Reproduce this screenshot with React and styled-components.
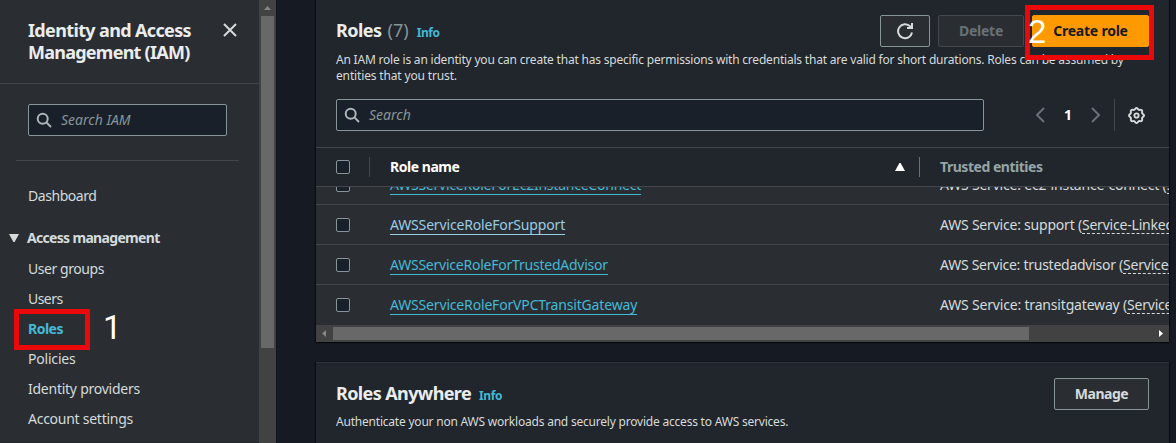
import React from 'react';
import styled, { createGlobalStyle } from 'styled-components';

const Global = createGlobalStyle`
  * { box-sizing: border-box; }
  body { margin: 0; background: #161a22; font: 14px/22px "Noto Sans", "Open Sans", sans-serif; color: #d5dbdb; }
  html, body { overflow: hidden; }
`;

const Page = styled.div`
  position: relative;
  display: flex;
  width: 1176px;
  height: 443px;
  overflow: hidden;
`;
const Txt = styled.span`
  letter-spacing: ${p => p.$ls || 0}px;
  white-space: pre;
`;

/* Side navigation */
const Sidebar = styled.nav`
  width: 259px;
  flex: none;
  background: #2a2e33;
  border-bottom: 1px solid #222529;
`;
const SideHeader = styled.header`
  display: flex;
  justify-content: space-between;
  align-items: flex-start;
  height: 84px;
  padding: 19px 21px 0 28px;
  border-bottom: 1px solid #43474c;
`;
const SideTitle = styled.h2`
  margin: 0;
  font-size: 18px;
  line-height: 22px;
  color: #eaeded;
`;
const CloseIcon = styled.svg`
  margin-top: 3px;
`;
const SearchBox = styled.div`
  display: flex;
  align-items: center;
  gap: 9px;
  width: ${p => p.$w}px;
  height: 32px;
  padding: 0 0 1px 7px;
  border: 1px solid #879596;
  border-radius: 2px;
  background: #1a2029;
  color: #879596;
  font-style: italic;
  line-height: 20px;
  svg { flex: none; margin-top: 1px; }
`;
const SideSearch = styled.div`
  margin: 20px 20px 0 16px;
  padding: 0 0 24px 12px;
  border-bottom: 1px solid #43474c;
`;
const NavList = styled.div`
  display: flex;
  flex-direction: column;
  gap: 8px;
  padding: 24px 0 0 28px;
`;
const NavItem = styled.div`
  height: 22px;
  color: ${p => (p.$active ? '#44b9d6' : '#d5dbdb')};
  font-weight: ${p => (p.$active ? 700 : 400)};
`;
const NavGroup = styled.div`
  display: flex;
  align-items: center;
  gap: 8px;
  height: 22px;
  margin: 12px 0 1px -19px;
  font-weight: 700;
`;
const VScroll = styled.div`
  width: 17px;
  flex: none;
  display: flex;
  flex-direction: column;
  align-items: center;
  background: #424242;
  padding-top: 6px;
`;
const VThumb = styled.div`
  width: 13px;
  height: 332px;
  margin-top: 6px;
  background: #686868;
`;

/* Content */
const Main = styled.main`
  flex: 1;
  padding-left: 39px;
  border-left: 1px solid #111419;
`;
const Card = styled.section`
  width: 853px;
  background: #21252c;
  box-shadow: 0 1px 1px #07090b, 1px 0 1px #0d0f13, -1px 0 1px #0d0f13;
`;
const RolesCard = styled(Card)`
  height: 342px;
`;
const AnywhereCard = styled(Card)`
  display: flex;
  justify-content: space-between;
  margin-top: 20px;
  height: 90px;
  border-top: 1px solid #2f343a;
  padding: 15px 20px 0;
`;
const CardHeader = styled.div`
  height: 99px;
  padding: 15px 20px 0;
`;
const HeaderRow = styled.div`
  display: flex;
  justify-content: space-between;
  height: 36px;
`;
const Heading = styled.h3`
  display: flex;
  align-items: baseline;
  margin: 4px 0 0;
  height: 22px;
  font-size: 18px;
  line-height: 22px;
  color: #eaeded;
`;
const Count = styled.span`
  margin-left: 6px;
  font-weight: 400;
  color: #879596;
`;
const Info = styled.span`
  margin-left: 8px;
  font-size: 12px;
  color: #44b9d6;
`;
const Desc = styled.p`
  margin: ${p => p.$top || 0}px 0 0;
  font-size: 12px;
  line-height: 16px;
  color: #d5dbdb;
`;
const Actions = styled.div`
  display: flex;
  gap: 8px;
`;
const looks = {
  normal: 'background:#2a2e33;border-color:#879596;color:#d5dbdb;',
  disabled: 'background:#2a2e33;border-color:#43474c;color:#687078;',
  primary: 'background:#ff9900;border-color:#ff9900;color:#16191f;',
};
const Button = styled.button`
  display: flex;
  align-items: center;
  justify-content: center;
  width: ${p => p.$w}px;
  height: 32px;
  padding: 0;
  border: 1px solid;
  border-radius: 2px;
  font: 700 14px/20px "Noto Sans", sans-serif;
  ${p => looks[p.$look || 'normal']}
`;
const Tools = styled.div`
  display: flex;
  align-items: center;
  padding: 0 20px;
  height: 32px;
`;
const Pager = styled.div`
  display: flex;
  align-items: center;
  margin-left: auto;
  height: 32px;
  gap: 19px;
  padding-right: 13px;
  border-right: 1px solid #43474c;
  color: #fff;
  font-weight: 700;
`;
const Gear = styled.svg`
  margin: 0 4px 0 13px;
`;

/* Table */
const grid = `
  display: grid;
  grid-template-columns: 53px 550px 1fr;
  align-items: center;
`;
const TableHead = styled.div`
  ${grid}
  height: 40px;
  margin-top: 16px;
  border-top: 1px solid #43474c;
  border-bottom: 1px solid #43474c;
  font-weight: 700;
`;
const HeadCell = styled.div`
  display: flex;
  align-items: center;
  justify-content: space-between;
  height: 20px;
  padding: 0 ${p => (p.$sorted ? 14 : 0)}px 0 20px;
  border-left: 1px solid ${p => (p.$sorted ? '#43474c' : '#687078')};
  color: ${p => (p.$sorted ? '#fff' : '#95a5a6')};
`;
const CheckCell = styled.div`
  padding-left: 20px;
`;
const Check = styled.div`
  width: 14px;
  height: 14px;
  border: 1px solid #879596;
  border-radius: 2px;
  background: #1a2029;
`;
const Body = styled.div`
  height: 138px;
  overflow: hidden;
  background: #2a2e33;
  display: flex;
  flex-direction: column;
  justify-content: flex-end;
`;
const Row = styled.div`
  ${grid}
  height: 40px;
  flex: none;
  border-bottom: ${p => (p.$last ? 0 : 1)}px solid #43474c;
`;
const Cell = styled.div`
  padding-left: 21px;
  white-space: pre;
  overflow: hidden;
`;
const RoleLink = styled.a`
  display: inline-block;
  height: 20px;
  line-height: 20px;
  border-bottom: 1px solid;
  color: ${p => (p.$hover ? '#99cbe4' : '#44b9d6')};
  letter-spacing: ${p => p.$ls}px;
`;
const Linked = styled.span`
  display: inline-block;
  height: 19px;
  line-height: 20px;
  border-bottom: 1px dashed #d5dbdb;
  letter-spacing: -0.2px;
`;
const HScroll = styled.div`
  display: flex;
  align-items: center;
  justify-content: space-between;
  height: 17px;
  padding: 0 6px;
  background: #424242;
`;
const HThumb = styled.div`
  width: 696px;
  height: 13px;
  margin: 0 auto 0 7px;
  background: #686868;
`;

/* Step annotations lying over the console */
const Mark = styled.div`
  position: absolute;
  left: ${p => p.$x}px;
  top: ${p => p.$y}px;
  width: ${p => p.$w}px;
  height: ${p => p.$h}px;
  border: 5px solid #ea0808;
`;
const Step = styled.div`
  position: absolute;
  left: ${p => p.$x}px;
  top: ${p => p.$y}px;
  font: 33px/36px ${p => p.$face || '"Liberation Sans"'}, sans-serif;
  color: #fff;
`;

const Magnifier = () => (
  <svg width="16" height="16" viewBox="0 0 16 16" fill="none" stroke="#aab7b8" strokeWidth="2">
    <circle cx="6.7" cy="6.7" r="5" />
    <path d="M10.4 10.4L15 15" />
  </svg>
);
const Chevron = ({ d }) => (
  <svg width="10" height="16" viewBox="0 0 10 16" fill="none" stroke="#687078" strokeWidth="2"><path d={d} /></svg>
);
const gearPath = (() => {
  const pts = [];
  for (let i = 0; i < 80; i++) {
    const a = (i / 80) * Math.PI * 2;
    const r = 6.4 + 0.65 * Math.cos(a * 8);
    pts.push(`${(8 + r * Math.cos(a)).toFixed(2)} ${(8 + r * Math.sin(a)).toFixed(2)}`);
  }
  return `M${pts.join('L')}Z`;
})();

const access = [
  ['User groups', -0.44], ['Users', -0.56], ['Roles', -0.5, true], ['Policies', -0.2],
  ['Identity providers', -0.25], ['Account settings', -0.26],
];
const roles = [
  { name: 'AWSServiceRoleForEc2InstanceConnect', ls: -0.23, svc: 'ec2-instance-connect', sls: -0.2 },
  { name: 'AWSServiceRoleForSupport', ls: -0.16, svc: 'support', sls: -0.21, hover: true },
  { name: 'AWSServiceRoleForTrustedAdvisor', ls: -0.23, svc: 'trustedadvisor', sls: -0.26 },
  { name: 'AWSServiceRoleForVPCTransitGateway', ls: -0.17, svc: 'transitgateway', sls: -0.18 },
];

export default function App() {
  return (
    <Page>
      <Global />
      <Sidebar>
        <SideHeader>
          <SideTitle>
            <Txt $ls={-0.64}>Identity and Access</Txt><br />
            <Txt $ls={-0.75}>Management (IAM)</Txt>
          </SideTitle>
          <CloseIcon width="16" height="16" viewBox="0 0 16 16" stroke="#d5dbdb" strokeWidth="2">
            <path d="M2 2L14 14M14 2L2 14" />
          </CloseIcon>
        </SideHeader>
        <SideSearch>
          <SearchBox $w={199}><Magnifier /><Txt>Search IAM</Txt></SearchBox>
        </SideSearch>
        <NavList>
          <NavItem><Txt $ls={-0.44}>Dashboard</Txt></NavItem>
          <NavGroup>
            <svg width="10" height="8" viewBox="0 0 10 8" fill="#d5dbdb"><path d="M0 0H10L5.6 8H4.4Z" /></svg>
            <Txt $ls={-0.68}>Access management</Txt>
          </NavGroup>
          {access.map(([t, ls, on]) => <NavItem key={t} $active={on}><Txt $ls={ls}>{t}</Txt></NavItem>)}
        </NavList>
      </Sidebar>
      <VScroll>
        <svg width="7" height="4" viewBox="0 0 7 4" fill="#868686"><path d="M0 4L3.5 0L7 4Z" /></svg>
        <VThumb />
      </VScroll>
      <Main>
        <RolesCard>
          <CardHeader>
            <HeaderRow>
              <Heading>
                <Txt $ls={-0.54}>Roles</Txt>
                <Count>(7)</Count>
                <Info><Txt $ls={-0.4}>Info</Txt></Info>
              </Heading>
              <Actions>
                <Button $w={50} aria-label="Refresh">
                  <svg width="18" height="18" viewBox="0 0 18 18" fill="none" stroke="#d5dbdb" strokeWidth="2">
                    <path d="M16 10.5A7 7 0 1 1 14.2 4.4L16 6" />
                    <path d="M16 1V6H11" />
                  </svg>
                </Button>
                <Button $w={86} $look="disabled"><Txt $ls={-0.26}>Delete</Txt></Button>
                <Button $w={117} $look="primary"><Txt $ls={-0.23}>Create role</Txt></Button>
              </Actions>
            </HeaderRow>
            <Desc $top={1}>
              <Txt $ls={-0.2}>An IAM role is an identity you can create that has specific permissions with credentials that are valid for short durations. Roles can be assumed by</Txt><br />
              <Txt $ls={-0.15}>entities that you trust.</Txt>
            </Desc>
          </CardHeader>
          <Tools>
            <SearchBox $w={648}><Magnifier /><Txt>Search</Txt></SearchBox>
            <Pager>
              <Chevron d="M9 1L2 8L9 15" />
              <Txt>1</Txt>
              <Chevron d="M1 1L8 8L1 15" />
            </Pager>
            <Gear width="17" height="17" viewBox="0 0 16 16" fill="none" stroke="#d5dbdb" strokeWidth="1.8">
              <path d={gearPath} />
              <circle cx="8" cy="8" r="2" />
            </Gear>
          </Tools>
          <TableHead>
            <CheckCell><Check /></CheckCell>
            <HeadCell $sorted>
              <Txt $ls={-0.46}>Role name</Txt>
              <svg width="10" height="8" viewBox="0 0 10 8" fill="#fff"><path d="M4.4 0H5.6L10 8H0Z" /></svg>
            </HeadCell>
            <HeadCell><Txt $ls={-0.47}>Trusted entities</Txt></HeadCell>
          </TableHead>
          <Body>
            {roles.map((r, i) => (
              <Row key={r.name} $last={i === 3}>
                <CheckCell><Check /></CheckCell>
                <Cell><RoleLink $ls={r.ls} $hover={r.hover}>{r.name}</RoleLink></Cell>
                <Cell><Txt $ls={r.sls}>{`AWS Service: ${r.svc} (`}</Txt><Linked>Service-Linked Role)</Linked></Cell>
              </Row>
            ))}
          </Body>
          <HScroll>
            <svg width="4" height="7" viewBox="0 0 4 7" fill="#868686"><path d="M4 0L0 3.5L4 7Z" /></svg>
            <HThumb />
            <svg width="4" height="7" viewBox="0 0 4 7" fill="#fff"><path d="M0 0L4 3.5L0 7Z" /></svg>
          </HScroll>
        </RolesCard>
        <AnywhereCard>
          <div>
            <Heading>
              <Txt $ls={-0.61}>Roles Anywhere</Txt>
              <Info><Txt $ls={-0.4}>Info</Txt></Info>
            </Heading>
            <Desc $top={10}><Txt $ls={-0.21}>Authenticate your non AWS workloads and securely provide access to AWS services.</Txt></Desc>
          </div>
          <Button $w={95}><Txt $ls={-0.46}>Manage</Txt></Button>
        </AnywhereCard>
      </Main>
      <Mark $x={14} $y={309} $w={76} $h={41} />
      <Step $x={103} $y={310} $face="Roboto">1</Step>
      <Mark $x={1025} $y={5} $w={129} $h={55} />
      <Step $x={1028} $y={14}>2</Step>
    </Page>
  );
}
